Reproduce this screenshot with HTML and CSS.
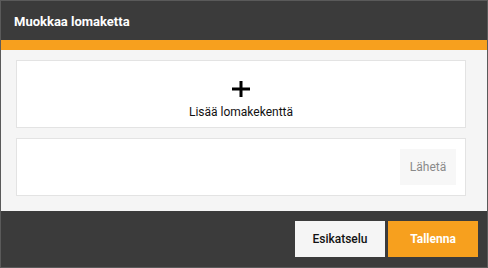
FILE: index.html
```html
<!DOCTYPE html>
<html lang="fi">
<head>
<meta charset="utf-8">
<title>Muokkaa lomaketta</title>
<link rel="stylesheet" href="styles.css">
</head>
<body>
<div class="dialog">
  <header class="dialog-header">
    <h1 class="dialog-title">Muokkaa lomaketta</h1>
  </header>
  <main class="dialog-body">
    <div class="card add-field">
      <svg class="plus-icon" width="18" height="16" viewBox="0 0 18 16" aria-hidden="true">
        <path d="M9 0V16M0 8H18" stroke="#000" stroke-width="3" fill="none"/>
      </svg>
      <span class="add-label">Lisää lomakekenttä</span>
    </div>
    <div class="card submit-row">
      <button class="btn-send" type="button">Lähetä</button>
    </div>
  </main>
  <footer class="dialog-footer">
    <button class="btn btn-preview" type="button">Esikatselu</button>
    <button class="btn btn-save" type="button">Tallenna</button>
  </footer>
</div>
</body>
</html>
```

FILE: styles.css
```css
* { box-sizing: border-box; }
html, body { margin: 0; padding: 0; }
body {
  width: 488px;
  height: 268px;
  font-family: Roboto, "Liberation Sans", sans-serif;
  background: #3b3b3b;
}
.dialog {
  width: 488px;
  height: 268px;
  border: 1px solid #5a5a5a;
  display: flex;
  flex-direction: column;
  background: #3b3b3b;
}
.dialog-header {
  height: 49px;
  background: #3b3b3b;
  border-bottom: 10px solid #f7a01e;
  padding: 0 13px;
  display: flex;
  align-items: center;
}
.dialog-title {
  margin: 0;
  color: #fff;
  font-size: 13px;
  font-weight: 700;
  line-height: 1;
  padding-top: 2px;
}
.dialog-body {
  background: #f5f5f5;
  height: 161px;
  padding: 10px 21px 0 15px;
  display: flex;
  flex-direction: column;
  gap: 10px;
}
.card {
  background: #fff;
  border: 1px solid #e3e3e3;
}
.add-field {
  height: 68px;
  display: flex;
  flex-direction: column;
  align-items: center;
  padding-top: 20px;
}
.plus-icon { display: block; }
.add-label {
  margin-top: 8px;
  font-size: 12px;
  line-height: 14px;
  color: #111;
}
.submit-row {
  height: 58px;
  display: flex;
  justify-content: flex-end;
  align-items: flex-start;
  padding: 10px 9px 0 0;
}
.btn-send {
  width: 56px;
  height: 36px;
  border: 0;
  background: #f7f7f7;
  color: #8a8a8a;
  font-family: inherit;
  font-size: 12px;
  padding: 0;
}
.dialog-footer {
  flex: 1;
  display: flex;
  justify-content: flex-end;
  align-items: flex-start;
  gap: 3px;
  padding: 10px 9px 0 0;
}
.btn {
  width: 90px;
  height: 36px;
  border: 0;
  padding: 0;
  font-family: inherit;
  font-size: 12px;
}
.btn-preview {
  background: #f5f5f5;
  color: #111;
  font-weight: 500;
}
.btn-save {
  background: #f7a01e;
  color: #fff;
  font-weight: 700;
}
```
